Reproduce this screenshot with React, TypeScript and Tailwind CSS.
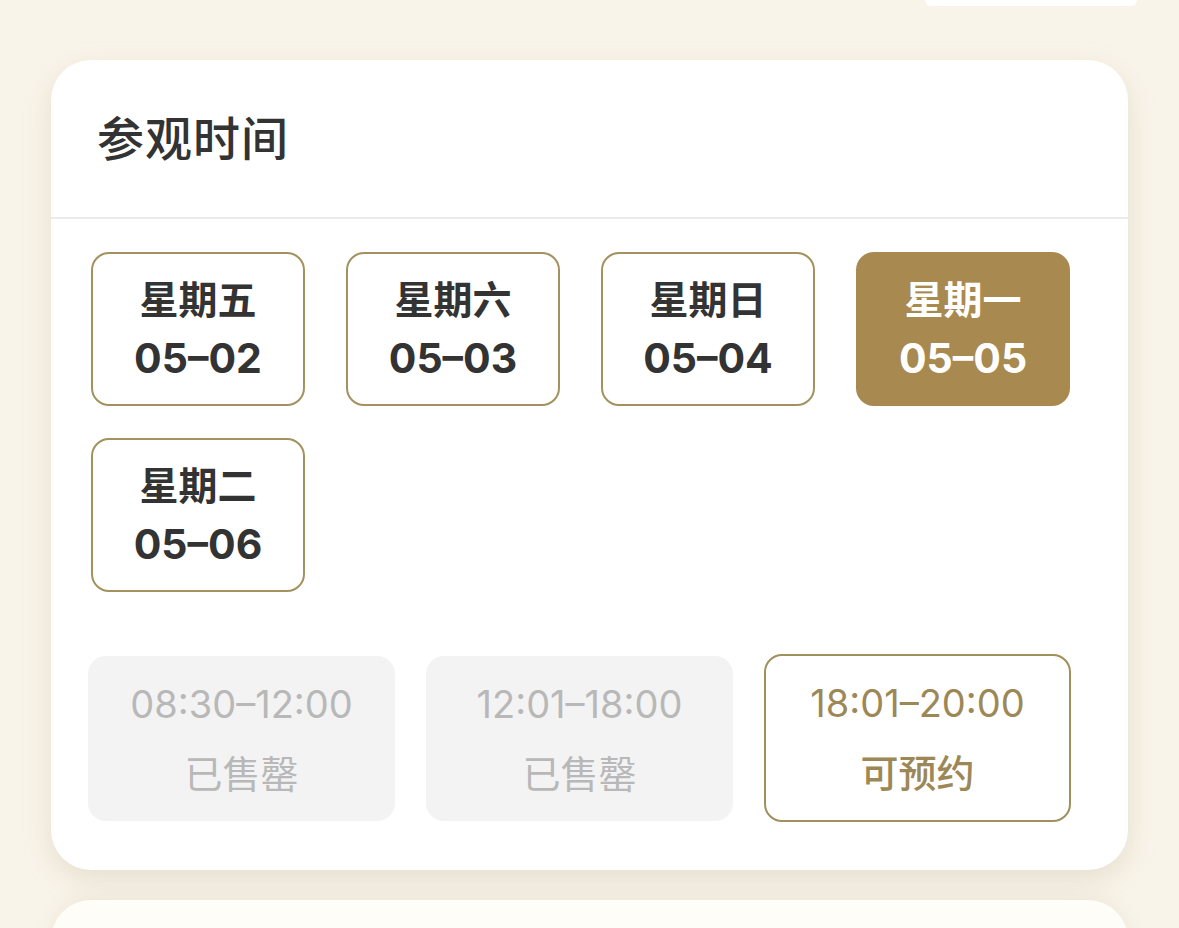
import React, { useState } from 'react';

const days = [
  { week: '星期五', date: '05–02' },
  { week: '星期六', date: '05–03' },
  { week: '星期日', date: '05–04' },
  { week: '星期一', date: '05–05' },
  { week: '星期二', date: '05–06' },
];

const slots = [
  { time: '08:30–12:00', status: '已售罄', soldOut: true },
  { time: '12:01–18:00', status: '已售罄', soldOut: true },
  { time: '18:01–20:00', status: '可预约', soldOut: false },
];

const font = { fontFamily: 'Inter, "Noto Sans CJK SC", sans-serif' };

const App: React.FC = () => {
  const [active, setActive] = useState(3);

  return (
    <div className="h-[928px] w-[1179px] bg-[#f9f4ea] overflow-hidden" style={font}>
      {/* bottom edge of the element above */}
      <div className="flex justify-end pr-[42px]">
        <div className="w-[212px] h-[6px] bg-white rounded-b-[20px]" />
      </div>

      <div className="mx-[51px] mt-[54px] bg-white rounded-[40px] shadow-[0_10px_30px_rgba(160,140,100,0.2)]">
        <div className="h-[159px] flex items-center pl-[46px] border-b-2 border-[#ebebeb]">
          <h2 className="text-[47px] font-medium text-[#333333] tracking-[1px] leading-none">参观时间</h2>
        </div>

        <div className="pl-[40px] pr-[57px] pt-[33px] pb-[48px]">
          <div className="flex flex-wrap gap-x-[41px] gap-y-[32px]">
            {days.map((d, i) => {
              const on = i === active;
              return (
                <button
                  key={d.date}
                  onClick={() => setActive(i)}
                  className={
                    on
                      ? 'w-[214px] h-[154px] rounded-[18px] bg-[#a8894f] border-[2.5px] border-[#a8894f] text-white flex flex-col items-center justify-center gap-[14px]'
                      : 'w-[214px] h-[154px] rounded-[18px] bg-white border-[2.5px] border-[#a3925f] text-[#333333] flex flex-col items-center justify-center gap-[14px]'
                  }
                >
                  <span className="text-[39px] font-bold leading-[44px]">{d.week}</span>
                  <span className="text-[41px] font-bold leading-[44px]">{d.date}</span>
                </button>
              );
            })}
          </div>

          <div className="mt-[64px] -ml-[3px] flex gap-[31px]">
            {slots.map((s) =>
              s.soldOut ? (
                <div
                  key={s.time}
                  className="w-[307px] h-[165px] rounded-[18px] bg-[#f3f3f3] text-[#b8b8b8] flex flex-col items-center justify-center gap-[26px]"
                >
                  <span className="text-[38px] leading-[44px]">{s.time}</span>
                  <span className="text-[38px] leading-[44px]">{s.status}</span>
                </div>
              ) : (
                <div
                  key={s.time}
                  className="w-[307px] h-[168px] -mt-[2px] rounded-[18px] bg-white border-[2.5px] border-[#a0905e] text-[#9c8856] flex flex-col items-center justify-center gap-[26px]"
                >
                  <span className="text-[38px] leading-[44px]">{s.time}</span>
                  <span className="text-[38px] font-medium leading-[44px]">{s.status}</span>
                </div>
              )
            )}
          </div>
        </div>
      </div>

      <div className="mx-[51px] mt-[30px] h-[120px] bg-[#fffdf8] rounded-t-[40px] shadow-[0_-2px_20px_rgba(160,140,100,0.12)]" />
    </div>
  );
};

export default App;
